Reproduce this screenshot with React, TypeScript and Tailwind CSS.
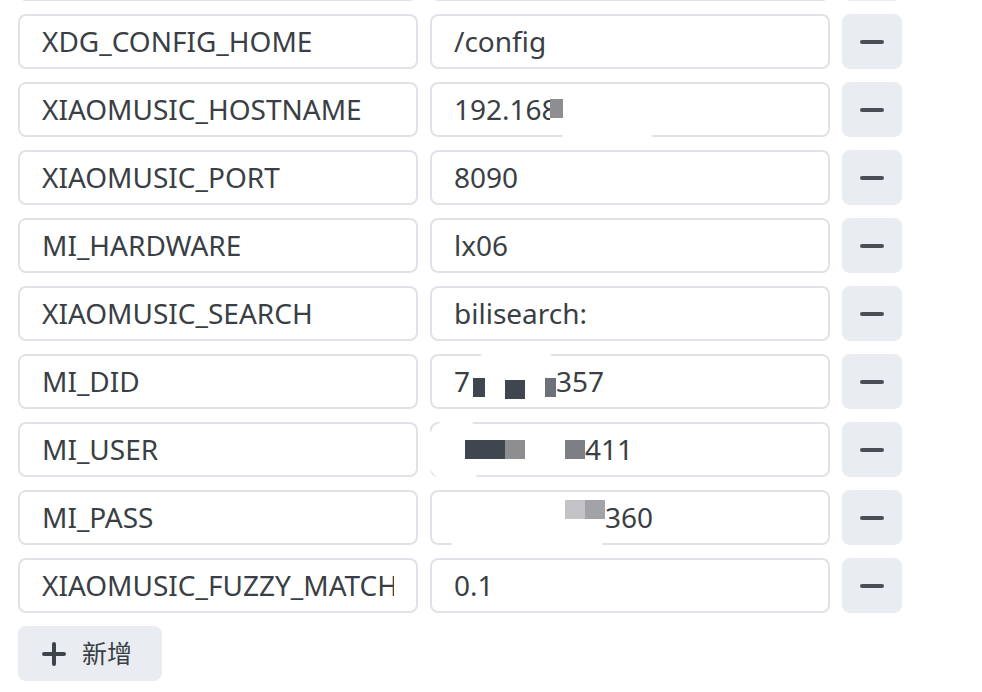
import type { ReactNode } from 'react'

const font = { fontFamily: '"Noto Sans", "Noto Sans CJK SC", sans-serif' }

interface EnvRow {
  name: string
  value: ReactNode
  smudge?: string
}

// grey squares left by the screenshot's redaction
function Px({ w, c, className = '' }: { w: number; c: string; className?: string }) {
  return <span className={`inline-block h-[19px] shrink-0 ${className}`} style={{ width: w, background: c }} />
}

const rows: EnvRow[] = [
  { name: 'TZ', value: 'Asia/Shanghai' },
  { name: 'XDG_CONFIG_HOME', value: '/config' },
  {
    name: 'XIAOMUSIC_HOSTNAME',
    smudge: 'left-[130px] top-[44px] h-[22px] w-[90px]',
    value: (
      <>
        <span>192.16</span>
        <span className="inline-block w-[8px] overflow-hidden">8</span>
        <Px w={13} c="#8e8e92" className="-translate-y-[1px]" />
      </>
    ),
  },
  { name: 'XIAOMUSIC_PORT', value: '8090' },
  { name: 'MI_HARDWARE', value: 'lx06' },
  { name: 'XIAOMUSIC_SEARCH', value: 'bilisearch:' },
  {
    name: 'MI_DID',
    smudge: 'left-[46px] -top-[6px] h-[28px] w-[76px]',
    value: (
      <>
        <span>7</span>
        <Px w={3} c="transparent" />
        <Px w={12} c="#3f4650" className="translate-y-[6px]" />
        <Px w={20} c="transparent" />
        <Px w={20} c="#3f4650" className="translate-y-[8px]" />
        <Px w={20} c="transparent" />
        <Px w={11} c="#6b7079" className="translate-y-[6px]" />
        <span>357</span>
      </>
    ),
  },
  {
    name: 'MI_USER',
    smudge: '-left-[6px] -top-[6px] h-[66px] w-[60px]',
    value: (
      <>
        <Px w={11} c="transparent" />
        <Px w={40} c="#3f4650" />
        <Px w={20} c="#8e8e92" />
        <Px w={40} c="transparent" />
        <Px w={20} c="#7d7f85" />
        <span>411</span>
      </>
    ),
  },
  {
    name: 'MI_PASS',
    smudge: 'left-[20px] top-[40px] h-[24px] w-[150px]',
    value: (
      <>
        <Px w={111} c="transparent" />
        <Px w={20} c="#c3c3c7" className="-translate-y-[8px]" />
        <Px w={20} c="#a2a3a7" className="-translate-y-[8px]" />
        <span>360</span>
      </>
    ),
  },
  { name: 'XIAOMUSIC_FUZZY_MATCH_CUTOFF', value: '0.1' },
]

function Field({ children, smudge }: { children: ReactNode; smudge?: string }) {
  return (
    <div className="relative flex h-[55px] w-[400px] items-center rounded-lg border-2 border-[#dfe3e8] bg-white px-[22px]">
      {smudge && <div className={`absolute rounded-full bg-white ${smudge}`} />}
      <div className="relative flex items-center overflow-hidden whitespace-nowrap text-[28px] leading-[1.4] text-[#3a3f45]">
        {children}
      </div>
    </div>
  )
}

function MinusButton() {
  return (
    <button className="flex h-[55px] w-[60px] items-center justify-center rounded-lg bg-[#e9edf1]">
      <span className="block h-[4px] w-[24px] rounded-full bg-[#4a4f55]" />
    </button>
  )
}

export default function App() {
  return (
    <div className="h-[692px] w-[982px] overflow-hidden bg-white pl-[18px]" style={font}>
      <div className="-mt-[54px] flex flex-col gap-[13px]">
        {rows.map((row) => (
          <div key={row.name} className="flex gap-[12px]">
            <Field>{row.name}</Field>
            <Field smudge={row.smudge}>{row.value}</Field>
            <MinusButton />
          </div>
        ))}
        <button className="flex h-[55px] w-[144px] items-center gap-[16px] rounded-lg bg-[#e9edf1] pl-[24px] text-[25px] text-[#3a3f45]">
          <svg width="24" height="24" viewBox="0 0 24 24">
            <path d="M12 2v20M2 12h20" stroke="#3e444b" strokeWidth="4" strokeLinecap="round" />
          </svg>
          <span>新增</span>
        </button>
      </div>
    </div>
  )
}
